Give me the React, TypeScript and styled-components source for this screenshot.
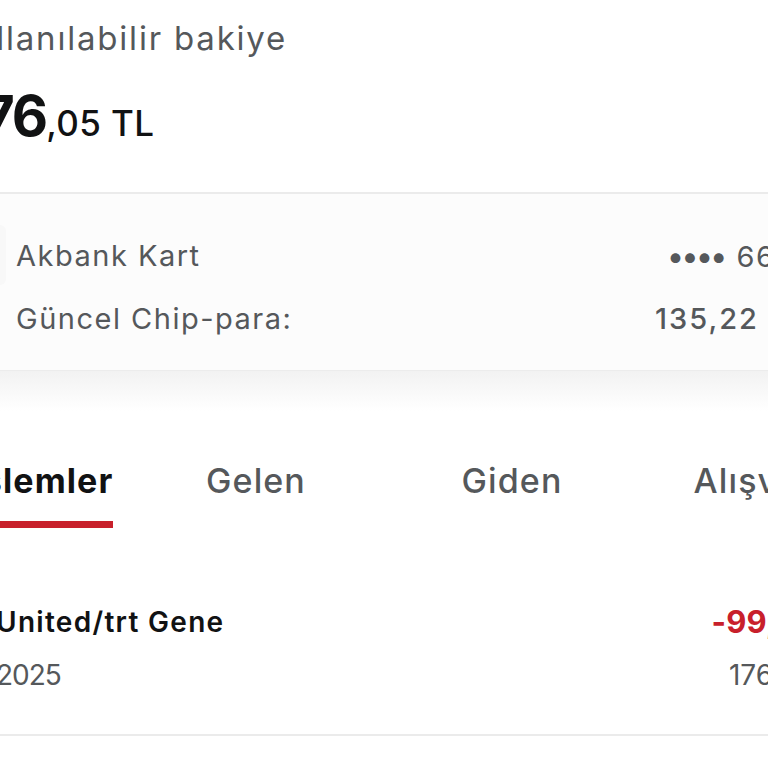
import styled, { createGlobalStyle } from "styled-components";

const GlobalStyle = createGlobalStyle`
  html, body {
    margin: 0;
    padding: 0;
    background: #ffffff;
    overflow: hidden;
  }

  body {
    font-family: Inter, "Noto Sans", "Liberation Sans", sans-serif;
    -webkit-font-smoothing: antialiased;
  }
`;

const color = {
  text: "#111213",
  muted: "#55585b",
  line: "#ebebeb",
  red: "#c8202b",
};

// the screenshot is a crop of a wider screen, so the page is shifted left
const Page = styled.div`
  width: 1024px;
  margin-left: -128px;
`;

const Summary = styled.section`
  height: 194px;
  box-sizing: border-box;
  padding: 20px 88px 0 80px;
  border-bottom: 2px solid ${color.line};
`;

const Label = styled.div`
  font-size: 33px;
  line-height: 36px;
  color: ${color.muted};
  letter-spacing: 1.8px;
`;

const Balance = styled.div`
  margin: 32px 0 0 8px;
  display: flex;
  align-items: baseline;
  color: ${color.text};
`;

const Whole = styled.span`
  font-size: 56px;
  line-height: 56px;
  font-weight: 700;
  letter-spacing: -2px;
`;

const Fraction = styled.span`
  font-size: 35px;
  font-weight: 500;
  letter-spacing: 0.4px;
`;

const CardInfo = styled.section`
  background: #fcfcfc;
  padding: 41px 88px 32px;
  display: flex;
  flex-direction: column;
  gap: 23px;
`;

const InfoRow = styled.div`
  display: flex;
  align-items: center;
  height: 40px;
  font-size: 29px;
  color: ${color.muted};
  letter-spacing: 1.5px;
`;

const CardThumb = styled.div`
  width: 46px;
  height: 60px;
  margin-right: 10px;
  border-radius: 6px;
  background: #f8f8f8;
`;

const InfoLabel = styled.span<{ $indent?: boolean }>`
  flex: 1;
  padding-left: ${(p) => (p.$indent ? "56px" : "0")};
`;

const InfoValue = styled.span<{ $strong?: boolean }>`
  font-weight: ${(p) => (p.$strong ? 500 : 400)};
  letter-spacing: ${(p) => (p.$strong ? "2px" : "1.5px")};
  white-space: nowrap;
`;

const Dots = styled.span`
  font-size: 31px;
  letter-spacing: -3px;
  margin-right: 12px;
`;

const Shade = styled.div`
  height: 40px;
  border-top: 1px solid #ececec;
  background: linear-gradient(#f2f2f2, #ffffff);
`;

const Tabs = styled.nav`
  display: grid;
  grid-template-columns: repeat(4, 256px);
`;

const Tab = styled.div<{ $active?: boolean }>`
  display: flex;
  flex-direction: column;
  align-items: center;
  padding-top: 50px;
  font-size: 34px;
  line-height: 40px;
  letter-spacing: 1.1px;
  font-weight: ${(p) => (p.$active ? 700 : 500)};
  color: ${(p) => (p.$active ? color.text : color.muted)};
  white-space: nowrap;
`;

const TabText = styled.span<{ $active?: boolean }>`
  padding-bottom: 20px;
  border-bottom: 7px solid ${(p) => (p.$active ? color.red : "transparent")};
`;

const TransactionRow = styled.div`
  display: flex;
  justify-content: space-between;
  padding: 76px 40px 41px 124px;
  border-bottom: 2px solid ${color.line};
`;

const Column = styled.div<{ $right?: boolean }>`
  display: flex;
  flex-direction: column;
  gap: 17px;
  align-items: ${(p) => (p.$right ? "flex-end" : "flex-start")};
`;

const Title = styled.span`
  font-size: 28px;
  line-height: 36px;
  font-weight: 600;
  letter-spacing: 1.3px;
  color: ${color.text};
`;

const Amount = styled.span`
  font-size: 31px;
  line-height: 36px;
  font-weight: 700;
  letter-spacing: 0.2px;
  margin-right: -8px;
  color: ${color.red};
`;

const Sub = styled.span<{ $tight?: boolean }>`
  font-size: 28px;
  line-height: 36px;
  letter-spacing: ${(p) => (p.$tight ? "-1px" : "0")};
  color: ${color.muted};
`;

const tabs = ["Tüm İşlemler", "Gelen", "Giden", "Alışveriş"];

const App = () => {
  return (
    <>
      <GlobalStyle />
      <Page>
        <Summary>
          <Label>Kullanılabilir bakiye</Label>
          <Balance>
            <Whole>176</Whole>
            <Fraction>,05 TL</Fraction>
          </Balance>
        </Summary>

        <CardInfo>
          <InfoRow>
            <CardThumb />
            <InfoLabel>Akbank Kart</InfoLabel>
            <InfoValue>
              <Dots>••••</Dots>6612
            </InfoValue>
          </InfoRow>
          <InfoRow>
            <InfoLabel $indent>Güncel Chip-para:</InfoLabel>
            <InfoValue $strong>135,22 TL</InfoValue>
          </InfoRow>
        </CardInfo>

        <Shade />

        <Tabs>
          {tabs.map((t, i) => (
            <Tab key={t} $active={i === 0}>
              <TabText $active={i === 0}>{t}</TabText>
            </Tab>
          ))}
        </Tabs>

        <TransactionRow>
          <Column>
            <Title>United/trt Gene</Title>
            <Sub $tight>2025</Sub>
          </Column>
          <Column $right>
            <Amount>-99,00 TL</Amount>
            <Sub>176,05 TL</Sub>
          </Column>
        </TransactionRow>
      </Page>
    </>
  );
};

export default App;
